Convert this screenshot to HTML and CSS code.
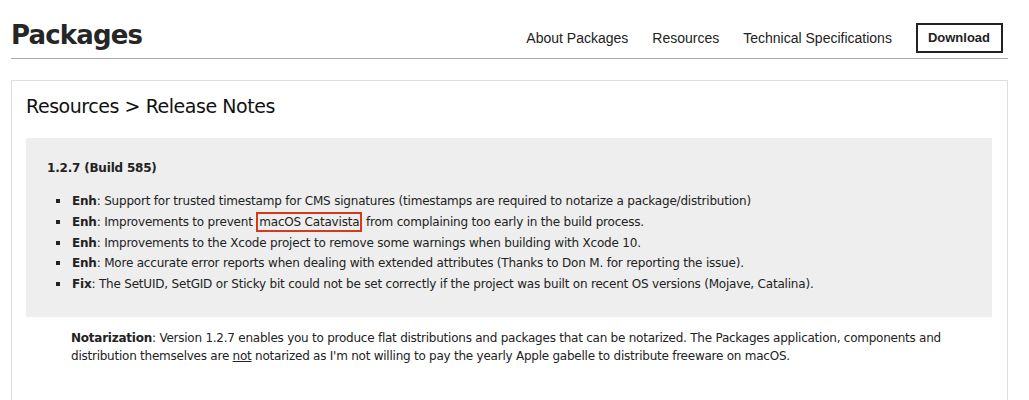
FILE: index.html
```html
<!DOCTYPE html>
<html>
<head>
<meta charset="utf-8">
<link rel="stylesheet" href="styles.css">
</head>
<body>
<div class="page">
  <header class="top">
    <h1 class="brand">Packages</h1>
    <nav class="nav">
      <a class="nav-link">About Packages</a>
      <a class="nav-link">Resources</a>
      <a class="nav-link">Technical Specifications</a>
      <a class="nav-button">Download</a>
    </nav>
  </header>
  <main class="card">
    <h2 class="crumb">Resources &gt; Release Notes</h2>
    <section class="release">
      <h3 class="version">1.2.7 (Build 585)</h3>
      <ul class="changes">
        <li><b>Enh</b>: Support for trusted timestamp for CMS signatures (timestamps are required to notarize a package/distribution)</li>
        <li><b>Enh</b>: Improvements to prevent <span class="mark">macOS Catavista</span> from complaining too early in the build process.</li>
        <li><b>Enh</b>: Improvements to the Xcode project to remove some warnings when building with Xcode 10.</li>
        <li><b>Enh</b>: More accurate error reports when dealing with extended attributes (Thanks to Don M. for reporting the issue).</li>
        <li><b>Fix</b>: The SetUID, SetGID or Sticky bit could not be set correctly if the project was built on recent OS versions (Mojave, Catalina).</li>
      </ul>
    </section>
    <p class="note"><b>Notarization</b>: Version 1.2.7 enables you to produce flat distributions and packages that can be notarized. The Packages application, components and distribution themselves are <u>not</u> notarized as I'm not willing to pay the yearly Apple gabelle to distribute freeware on macOS.</p>
  </main>
</div>
</body>
</html>
```
FILE: styles.css
```css
html, body {
  margin: 0;
  padding: 0;
  background: #fff;
}
.page {
  width: 997px;
  margin-left: 11px;
  font-family: "DejaVu Sans", sans-serif;
  color: #222;
}
.top {
  display: flex;
  align-items: center;
  justify-content: space-between;
  height: 58px;
  border-bottom: 1px solid #aaa;
}
.brand {
  margin: 0;
  font-size: 26px;
  font-weight: bold;
  color: #262626;
  letter-spacing: -0.85px;
  padding-top: 12px;
}
.nav {
  display: flex;
  align-items: center;
  margin-right: 5px;
  padding-top: 17px;
  font-family: "Liberation Sans", Arial, sans-serif;
}
.nav-link {
  font-size: 14px;
  color: #222;
  margin-right: 24px;
}
.nav-button {
  font-size: 13px;
  font-weight: bold;
  color: #222;
  border: 2px solid #222;
  padding: 5px 11px 6px 10px;
}
.card {
  box-sizing: border-box;
  margin-top: 21px;
  border: 1px solid #ddd;
  border-bottom: none;
  padding: 14px 15px 0 14px;
  height: 320px;
}
.crumb {
  margin: 0 0 21px;
  font-size: 19px;
  font-weight: normal;
  color: #111;
  letter-spacing: -0.45px;
}
.release {
  background: #eee;
  padding: 23px 20px 22px 21px;
  font-size: 12px;
  letter-spacing: -0.2px;
}
.version {
  margin: 0 0 16px;
  font-size: 12px;
  font-weight: bold;
  color: #222;
}
.changes {
  margin: 0;
  padding-left: 25px;
  list-style: none;
}
.changes li {
  line-height: 20.8px;
}
.changes li::before {
  content: "";
  display: inline-block;
  width: 4px;
  height: 4px;
  background: #222;
  margin-left: -16px;
  margin-right: 12px;
  vertical-align: 2px;
}
.mark {
  border: 2px solid #d8391c;
  padding: 1px 1px;
}
.note {
  margin: 12px 0 0 45px;
  font-size: 12px;
  line-height: 18px;
  color: #222;
  width: 900px;
  letter-spacing: -0.24px;
}
```
